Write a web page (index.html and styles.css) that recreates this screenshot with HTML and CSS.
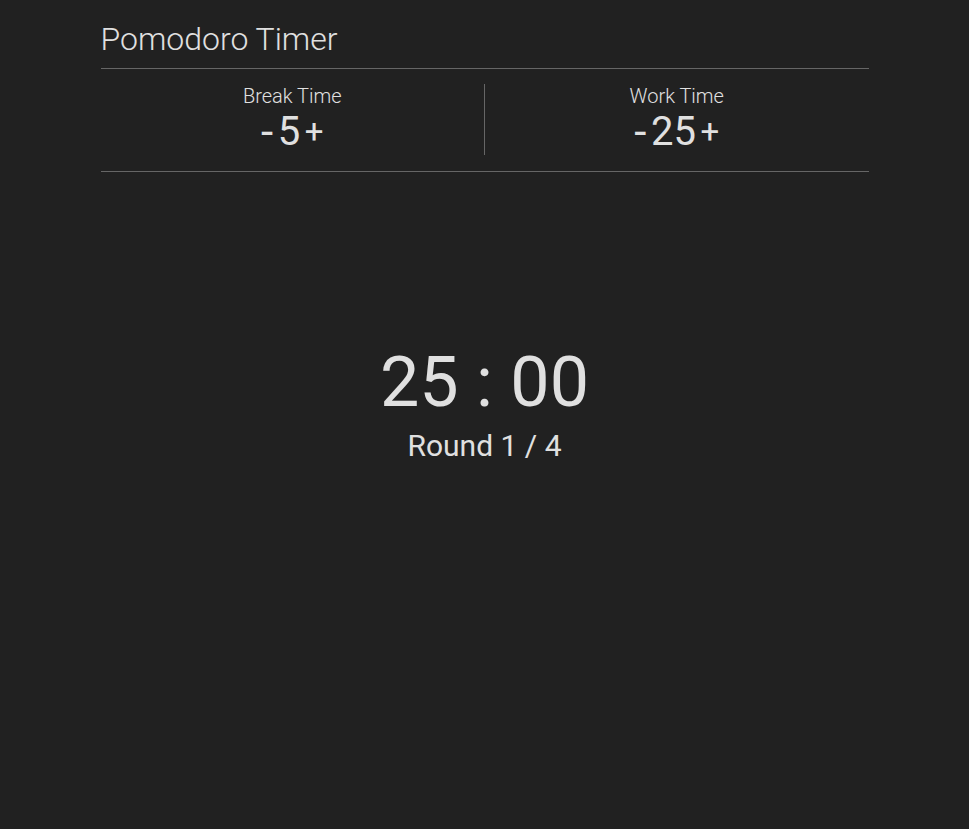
FILE: index.html
```html
<!DOCTYPE html>
<html lang="en">
<head>
<meta charset="utf-8">
<title>Pomodoro Timer</title>
<link rel="stylesheet" href="styles.css">
</head>
<body>
<div class="app">
  <h1 class="title">Pomodoro Timer</h1>
  <div class="settings">
    <div class="setting">
      <div class="setting-label">Break Time</div>
      <div class="setting-control">
        <button class="adjust minus">-</button>
        <span class="setting-value">5</span>
        <button class="adjust plus">+</button>
      </div>
    </div>
    <div class="setting setting-right">
      <div class="setting-label">Work Time</div>
      <div class="setting-control">
        <button class="adjust minus">-</button>
        <span class="setting-value">25</span>
        <button class="adjust plus">+</button>
      </div>
    </div>
  </div>
  <div class="timer">
    <div class="clock">25 : 00</div>
    <div class="round">Round 1 / 4</div>
  </div>
</div>
</body>
</html>
```
FILE: styles.css
```css
html, body {
  margin: 0;
  padding: 0;
  background: #212121;
  height: 100%;
}
body {
  font-family: Roboto, "Liberation Sans", sans-serif;
  color: #e0e0e0;
}
.app {
  width: 768px;
  margin: 0 auto;
  padding-top: 20px;
}
.title {
  margin: 0 0 10px 0;
  font-size: 32px;
  font-weight: 300;
  line-height: normal;
}
.settings {
  display: flex;
  border-top: 1px solid #666;
  border-bottom: 1px solid #666;
  padding: 15px 0 16px;
}
.setting {
  flex: 1;
  display: flex;
  flex-direction: column;
  align-items: center;
}
.setting-right {
  border-left: 1px solid #666;
}
.setting-label {
  font-size: 20px;
  font-weight: 300;
  line-height: normal;
}
.setting-control {
  display: flex;
  align-items: center;
  font-size: 40px;
  line-height: normal;
}
.adjust {
  background: none;
  border: none;
  color: #e0e0e0;
  font-family: inherit;
  padding: 0 6px;
  line-height: 1;
  cursor: pointer;
}
.minus {
  font-size: 44px;
  padding-right: 4.5px;
}
.plus {
  font-size: 33px;
  padding-left: 4.5px;
}
.timer {
  display: flex;
  flex-direction: column;
  align-items: center;
  margin-top: 169px;
}
.clock {
  font-size: 70px;
  line-height: normal;
}
.round {
  margin-top: 5px;
  font-size: 30px;
  line-height: normal;
}
```
